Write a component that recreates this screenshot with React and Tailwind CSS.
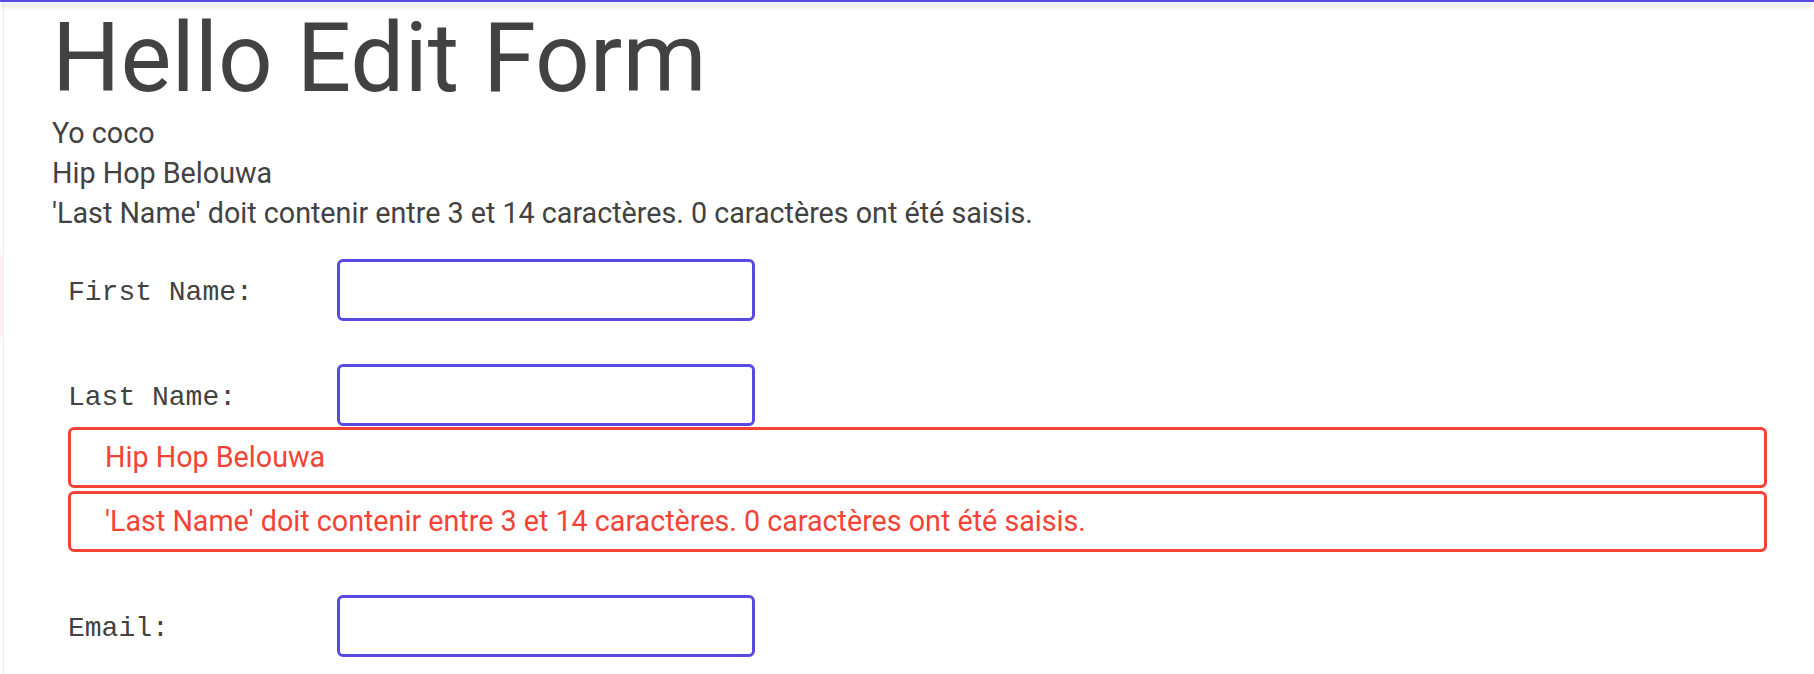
import React from "react"

const Field = ({ label, className = "" }) => (
  <div className={`flex items-center ${className}`}>
    <label className="mt-[6px] w-[269px] shrink-0 font-['Liberation_Mono',monospace] text-[28px] text-[#424242]">
      {label}
    </label>
    <input
      type="text"
      className="h-[62px] w-[418px] rounded-[6px] border-[3px] border-[#594ae2] bg-white outline-none"
    />
  </div>
)

const ValidationMessage = ({ children }) => (
  <div className="flex h-[61px] items-center rounded-[6px] border-[3px] border-[#f44336] pl-[34px] text-[28.7px] text-[#f44336]">
    {children}
  </div>
)

export default function App() {
  const messages = [
    "Hip Hop Belouwa",
    "'Last Name' doit contenir entre 3 et 14 caractères. 0 caractères ont été saisis.",
  ]

  return (
    <div className="flex min-h-screen flex-col bg-white font-['Roboto',sans-serif] text-[#424242]">
      {/* app bar bottom edge */}
      <div className="relative z-10 h-[2px] shrink-0 bg-[#594ae2] shadow-[0px_2px_4px_-1px_rgba(0,0,0,0.25),0px_4px_5px_0px_rgba(0,0,0,0.16),0px_1px_10px_0px_rgba(0,0,0,0.14)]" />
      <div className="flex flex-1">
        <div className="flex w-[4px] shrink-0 flex-col border-r border-[#ececec]">
          <div className="mt-[253px] h-[82px] bg-[#fff1f4]" />
        </div>
        <main className="flex-1 pl-[48px] pr-[31px]">
          <h1 className="mt-[6px] text-[96px] font-normal leading-[100px]">
            Hello Edit Form
          </h1>
          <div className="mt-[5px] text-[28.7px] leading-[40px]">
            <div>Yo coco</div>
            {messages.map((m, i) => (
              <div key={i}>{m}</div>
            ))}
          </div>
          <form className="mt-[26px] px-[16px]">
            <Field label="First Name:" />
            <Field label="Last Name:" className="mt-[43px]" />
            <div className="mt-[1px] flex flex-col gap-[3px]">
              {messages.map((m, i) => (
                <ValidationMessage key={i}>{m}</ValidationMessage>
              ))}
            </div>
            <Field label="Email:" className="mt-[43px]" />
          </form>
        </main>
      </div>
    </div>
  )
}
